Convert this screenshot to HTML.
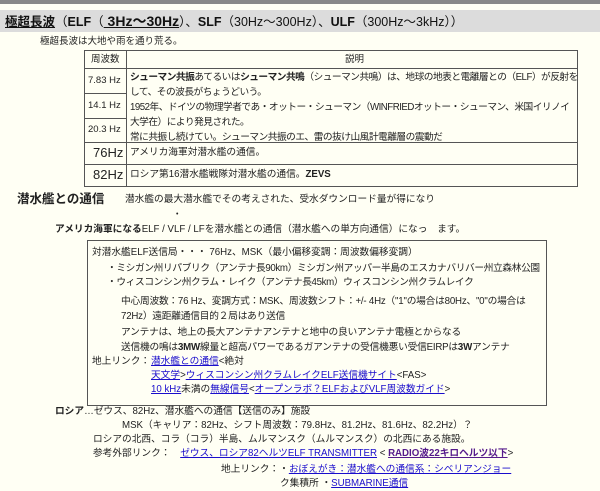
<!DOCTYPE html>
<html><head><meta charset="utf-8"><style>
*{margin:0;padding:0;box-sizing:border-box}
body{width:600px;height:489px;background:#fffff4;font-family:"Liberation Sans","Noto Sans CJK JP",sans-serif;font-size:9.7px;color:#222;position:relative;overflow:hidden}
.a{position:absolute;white-space:nowrap;line-height:14px}
a{color:#1a0dcc;text-decoration:underline}
.bar{position:absolute;left:0;top:0;width:600px;height:4px;background:#888}
.hd{position:absolute;left:0;top:10px;width:600px;height:22px;background:#dcdcdc}
.c{position:absolute;border:1px solid #555}
.t{position:absolute;left:84px;top:50px;width:494px;height:137px;border:1.5px solid #555}
</style></head><body>
<div class="bar"></div>
<div class="hd"></div>
<div class="a" style="left:5px;top:12px;font-size:12.5px;line-height:18px;color:#111"><b><u>極超長波</u></b>（<b>ELF</b>（<u style="font-size:14px"><b>&nbsp;3Hz～30Hz</b></u>）、<b>SLF</b>（30Hz～300Hz）、<b>ULF</b>（300Hz～3kHz））</div>
<div class="a" style="left:40px;top:35px;font-size:9.5px">極超長波は大地や雨を通り荒る。</div>
<div class="t"></div>
<div class="c" style="left:84px;top:50px;width:43px;height:137px;border-width:0 1px 0 0"></div>
<div class="c" style="left:84px;top:68px;width:494px;height:0;border-width:1px 0 0 0"></div>
<div class="c" style="left:84px;top:93px;width:43px;height:0;border-width:1px 0 0 0"></div>
<div class="c" style="left:84px;top:118px;width:43px;height:0;border-width:1px 0 0 0"></div>
<div class="c" style="left:84px;top:142px;width:494px;height:0;border-width:1px 0 0 0"></div>
<div class="c" style="left:84px;top:164px;width:494px;height:0;border-width:1px 0 0 0"></div>
<div class="a" style="left:91px;top:53px;font-size:9.5px">周波数</div>
<div class="a" style="left:345px;top:53px;font-size:9.5px">説明</div>
<div class="a" style="left:88px;top:74px;font-size:9.5px">7.83 Hz</div>
<div class="a" style="left:88px;top:99px;font-size:9.5px">14.1 Hz</div>
<div class="a" style="left:88px;top:123px;font-size:9.5px">20.3 Hz</div>
<div class="a" style="left:93px;top:145px;font-size:13px;line-height:16px">76Hz</div>
<div class="a" style="left:93px;top:167px;font-size:13px;line-height:16px">82Hz</div>
<div class="a" style="left:130px;top:70px;line-height:15px;letter-spacing:-0.5px"><b>シューマン共振</b>あてるいは<b>シューマン共鳴</b>（シューマン共鳴）は、地球の地表と電離層との（ELF）が反射を<br>して、その波長がちょうどいう。<br>1952年、ドイツの物理学者であ・オットー・シューマン（WINFRIEDオットー・シューマン、米国イリノイ<br>大学在）により発見された。<br>常に共振し続けてい。シューマン共振のエ、雷の抜け山風計電離層の震動だ</div>
<div class="a" style="left:130px;top:146px">アメリカ海軍対潜水艦の通信。</div>
<div class="a" style="left:130px;top:168px">ロシア第16潜水艦戦隊対潜水艦の通信。<b>ZEVS</b></div>
<div class="a" style="left:17px;top:191px;font-size:12.5px;line-height:16px"><b>潜水艦との通信</b></div>
<div class="a" style="left:125px;top:193px">潜水艦の最大潜水艦でその考えされた、受水ダウンロード量が得になり</div>
<div class="a" style="left:176px;top:208px;font-size:7px">•</div>
<div class="a" style="left:55px;top:223px"><b>アメリカ海軍になる</b>ELF / VLF / LFを潜水艦との通信（潜水艦への単方向通信）になっ　ます。</div>
<div class="c" style="left:87px;top:240px;width:460px;height:166px;border-width:1.5px"></div>
<div class="a" style="left:92px;top:246px">対潜水艦ELF送信局・・・ 76Hz、MSK（最小偏移変調：周波数偏移変調）</div>
<div class="a" style="left:107px;top:262px;letter-spacing:-0.35px">・ミシガン州リパブリク（アンテナ長90km）ミシガン州アッパー半島のエスカナバリバー州立森林公園<br>・ウィスコンシン州クラム・レイク（アンテナ長45km）ウィスコンシン州クラムレイク</div>
<div class="a" style="left:121px;top:294px;line-height:15.3px;letter-spacing:-0.2px">中心周波数：76 Hz、変調方式：MSK、周波数シフト：+/- 4Hz（"1"の場合は80Hz、"0"の場合は<br>72Hz）遠距離通信目的２局はあり送信<br>アンテナは、地上の長大アンテナアンテナと地中の良いアンテナ電極とからなる<br>送信機の鳴は<b>3MW</b>線量と超高パワーであるガアンテナの受信機悪い受信EIRPは<b>3W</b>アンテナ</div>
<div class="a" style="left:92px;top:355px">地上リンク：</div>
<div class="a" style="left:151px;top:355px"><a>潜水艦との通信</a>&lt;絶対<br><a>天文学</a>&gt;<a>ウィスコンシン州クラムレイクELF送信機サイト</a>&lt;FAS&gt;<br><a>10 kHz</a>未満の<a>無線信号</a>&lt;<a>オープンラボ？ELFおよびVLF周波数ガイド</a>&gt;</div>
<div class="a" style="left:55px;top:405px"><b>ロシア</b>…ゼウス、82Hz、潜水艦への通信【送信のみ】施設</div>
<div class="a" style="left:122px;top:419px">MSK（キャリア：82Hz、シフト周波数：79.8Hz、81.2Hz、81.6Hz、82.2Hz）？</div>
<div class="a" style="left:93px;top:433px">ロシアの北西、コラ（コラ）半島、ムルマンスク（ムルマンスク）の北西にある施設。</div>
<div class="a" style="left:93px;top:447px">参考外部リンク：　<a>ゼウス、ロシア82ヘルツELF TRANSMITTER</a> &lt; <a style="color:#551a8b"><b>RADIO波22キロヘルツ以下</b></a>&gt;</div>
<div class="a" style="left:221px;top:463px">地上リンク：・<a>おぼえがき：潜水艦への通信系：シベリアンジョー</a></div>
<div class="a" style="left:280px;top:477px">ク集積所 ・<a>SUBMARINE通信</a></div>
</body></html>
